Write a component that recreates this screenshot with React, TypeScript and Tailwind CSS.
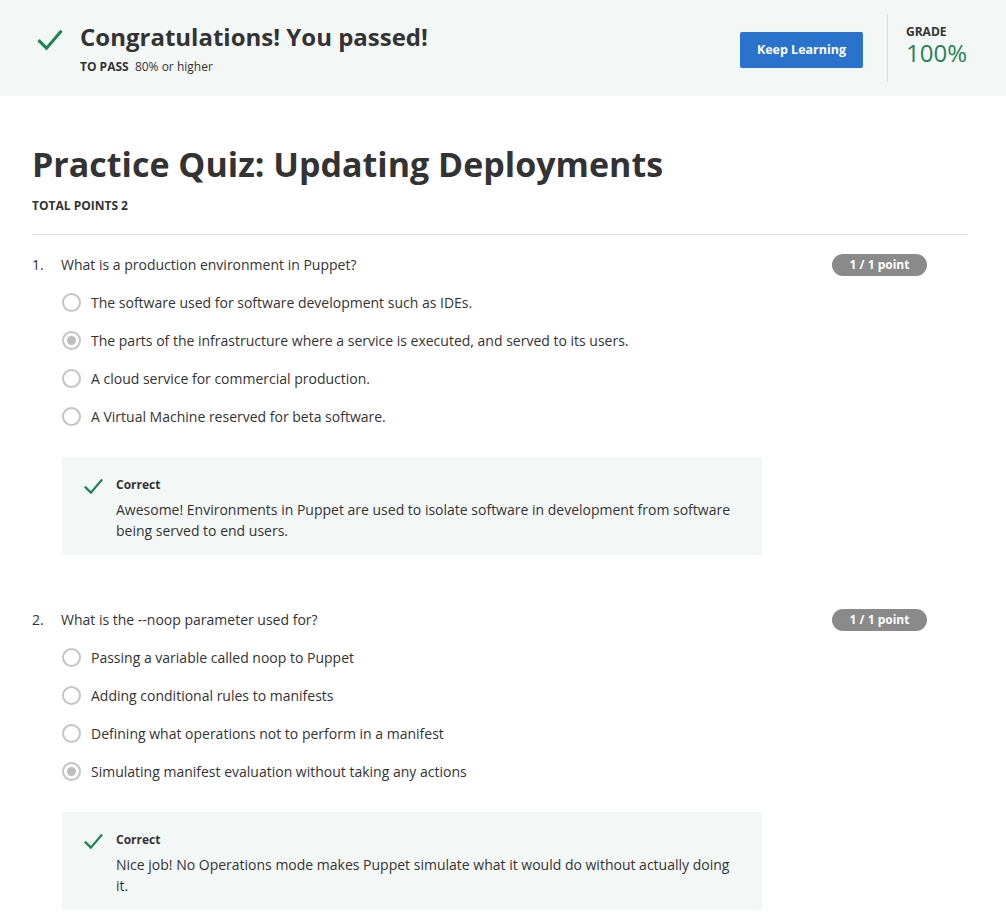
import React from "react";

type Question = {
  num: string;
  text: string;
  options: string[];
  selected: number;
  feedback: string;
};

const questions: Question[] = [
  {
    num: "1.",
    text: "What is a production environment in Puppet?",
    options: [
      "The software used for software development such as IDEs.",
      "The parts of the infrastructure where a service is executed, and served to its users.",
      "A cloud service for commercial production.",
      "A Virtual Machine reserved for beta software.",
    ],
    selected: 1,
    feedback:
      "Awesome! Environments in Puppet are used to isolate software in development from software being served to end users.",
  },
  {
    num: "2.",
    text: "What is the --noop parameter used for?",
    options: [
      "Passing a variable called noop to Puppet",
      "Adding conditional rules to manifests",
      "Defining what operations not to perform in a manifest",
      "Simulating manifest evaluation without taking any actions",
    ],
    selected: 3,
    feedback:
      "Nice job! No Operations mode makes Puppet simulate what it would do without actually doing it.",
  },
];

function Check({ className }: { className?: string }) {
  return (
    <svg viewBox="0 0 24 24" className={className} fill="none" stroke="#1f8354" strokeWidth={2.6} strokeLinecap="square">
      <path d="M3 13 L9 19 L21 5" />
    </svg>
  );
}

function Radio({ checked }: { checked: boolean }) {
  return (
    <span className="flex h-[19px] w-[19px] shrink-0 items-center justify-center rounded-full border-2 border-[#c4c4c4] bg-white">
      {checked && <span className="h-[9px] w-[9px] rounded-full bg-[#bdbdbd]" />}
    </span>
  );
}

export default function App() {
  return (
    <div className="min-h-screen bg-white text-[#1f1f1f]" style={{ fontFamily: '"Open Sans", Arial, sans-serif' }}>
      {/* Result banner */}
      <header className="flex h-[96px] items-center bg-[#f3f8f7] pl-[36px] pr-[38px]">
        <div className="flex flex-1 items-start gap-[16px] self-start pt-[22px]">
          <Check className="mt-[4px] h-[28px] w-[28px]" />
          <div>
            <h2 className="text-[24px] font-bold leading-[30px] text-[#333]">Congratulations! You passed!</h2>
            <p className="mt-[7px] text-[12px] leading-[16px] text-[#333]">
              <span className="font-bold">TO PASS</span>&nbsp; 80% or higher
            </p>
          </div>
        </div>
        <button
          type="button"
          className="mt-[4px] h-[36px] w-[123px] rounded-[2px] bg-[#2a73cc] text-[12.5px] font-bold text-white"
        >
          Keep Learning
        </button>
        <div className="ml-[24px] h-[68px] w-px bg-[#d9dcdc]" />
        <div className="ml-[18px] w-[62px] self-start pt-[24px]">
          <div className="text-[12px] font-bold leading-[16px] text-[#333]">GRADE</div>
          <div className="mt-[1px] text-[24px] leading-[24px] text-[#1f8354]">100%</div>
        </div>
      </header>

      <main className="px-[32px] pt-[44px]">
        <h1 className="text-[34px] font-bold leading-[48px] text-[#333]">
          Practice Quiz: Updating Deployments
        </h1>
        <p className="mt-[10px] text-[12px] font-bold leading-[16px] text-[#333]">TOTAL POINTS 2</p>
        <div className="mt-[20px] h-px w-[936px] bg-[#e0e0e0]" />

        {questions.map((q, qi) => (
          <section key={q.num} className={qi === 0 ? "pt-[19px]" : "pt-[54px]"}>
            <div className="flex items-center pr-[47px]">
              <span className="w-[29px] text-[14px] leading-[22px] text-[#333]">{q.num}</span>
              <span className="flex-1 text-[14px] leading-[22px] text-[#333]">{q.text}</span>
              <span className="flex h-[22px] w-[95px] items-center justify-center rounded-full bg-[#8a8a8a] text-[12px] font-bold text-white">
                1 / 1 point
              </span>
            </div>
            <div className="mt-[15px] flex flex-col gap-[16px] pl-[30px]">
              {q.options.map((o, oi) => (
                <label key={oi} className="flex h-[22px] items-center gap-[10px] text-[14px] text-[#333]">
                  <Radio checked={oi === q.selected} />
                  <span>{o}</span>
                </label>
              ))}
            </div>
            <div className="ml-[30px] mt-[30px] flex w-[700px] gap-[12px] bg-[#f3f8f7] px-[21px] pb-[14px] pt-[19px]">
              <Check className="h-[21px] w-[21px] shrink-0" />
              <div>
                <div className="text-[12px] font-bold leading-[18px] text-[#333]">Correct</div>
                <p className="mt-[5px] text-[14px] leading-[21px] text-[#333]">{q.feedback}</p>
              </div>
            </div>
          </section>
        ))}
      </main>
    </div>
  );
}
